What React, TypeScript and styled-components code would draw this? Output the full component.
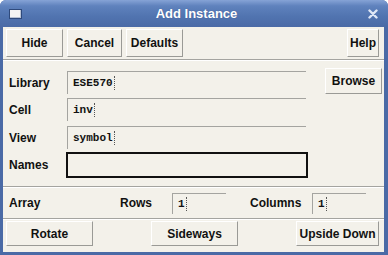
import * as React from "react";
import styled, { createGlobalStyle } from "styled-components";

const GlobalStyle = createGlobalStyle`
  html, body {
    margin: 0;
    padding: 0;
    background: #ffffff;
  }
  * {
    box-sizing: border-box;
  }
`;

const Window = styled.div`
  width: 388px;
  height: 255px;
  display: flex;
  flex-direction: column;
  background: #4a6aa6;
  border-radius: 6px 6px 0 0;
  overflow: hidden;
  font-family: "Liberation Sans", Arial, sans-serif;
`;

const TitleBar = styled.div`
  height: 27px;
  flex: none;
  display: flex;
  align-items: center;
  padding: 0 10px 0 9px;
  background: linear-gradient(#86a3d6 0%, #5f82bd 22%, #5174b0 60%, #4a6aa6 100%);
`;

const WinIcon = styled.div`
  width: 13px;
  height: 10px;
  background: #f4f4f4;
  border: 1px solid #2f4a7c;
  box-shadow: inset -1px -1px 0 #b8c2d4;
`;

const Title = styled.div`
  flex: 1;
  text-align: center;
  color: #ffffff;
  font-weight: bold;
  font-size: 13px;
  padding-left: 3px;
  text-shadow: 0 0 1px #3a5990;
`;

const Body = styled.div`
  flex: 1;
  display: flex;
  flex-direction: column;
  margin: 0 4px 3px 3px;
  background: #f3f1ea;
`;

const Toolbar = styled.div`
  height: 32px;
  display: flex;
  align-items: flex-start;
  gap: 4px;
  padding: 2px 5px 0 3px;
`;

const Button = styled.button<{ $w: number; $h?: number }>`
  width: ${(p) => p.$w}px;
  height: ${(p) => p.$h ?? 28}px;
  margin: 0;
  padding: 0;
  background: #f3f1ea;
  border: 1px solid;
  border-color: #ffffff #9a9a96 #9a9a96 #ffffff;
  font-family: "Liberation Sans", Arial, sans-serif;
  font-weight: bold;
  font-size: 12px;
  color: #111111;
  cursor: pointer;
`;

const Spacer = styled.div<{ $w?: number }>`
  flex: ${(p) => (p.$w ? "none" : 1)};
  width: ${(p) => (p.$w ? `${p.$w}px` : "auto")};
`;

const Separator = styled.div`
  height: 2px;
  border-top: 1px solid #a4a4a0;
  border-bottom: 1px solid #ffffff;
`;

const Form = styled.div`
  height: 125px;
  display: grid;
  grid-template-columns: 58px 239px 1fr;
  grid-template-rows: 27px 28px 26px 26px;
  padding: 10px 2px 0 6px;
`;

const Label = styled.div<{ $h?: number; $w?: number }>`
  width: ${(p) => (p.$w ? `${p.$w}px` : "auto")};
  height: ${(p) => p.$h ?? 23}px;
  display: flex;
  align-items: center;
  font-weight: bold;
  font-size: 12px;
  color: #111111;
`;

const Field = styled.div<{ $w?: number; $h?: number }>`
  width: ${(p) => (p.$w ? `${p.$w}px` : "100%")};
  height: ${(p) => p.$h ?? 23}px;
  display: flex;
  align-items: center;
  padding-left: 5px;
  border-top: 1px solid #a4a4a0;
  border-left: 1px solid #a4a4a0;
  font-family: "Liberation Mono", "Courier New", monospace;
  font-weight: bold;
  font-size: 11px;
  color: #111111;
`;

const NamesField = styled.div`
  width: 242px;
  height: 26px;
  margin-left: -1px;
  border: 2px solid #111111;
  background: #f3f1ea;
`;

const Caret = styled.span`
  display: inline-block;
  width: 1px;
  height: 14px;
  margin-left: 1px;
  border-left: 1px dotted #555555;
`;

const BrowseCell = styled.div`
  display: flex;
  justify-content: flex-end;
  align-items: flex-start;
  margin-top: -3px;
`;

const ArrayRow = styled.div`
  height: 30px;
  display: flex;
  align-items: center;
  padding: 0 0 0 6px;
`;

const BottomRow = styled.div`
  flex: 1;
  display: flex;
  justify-content: space-between;
  align-items: flex-start;
  padding: 1px 5px 0 3px;
`;

const CloseIcon = () => (
  <svg width="10" height="10" viewBox="0 0 10 10">
    <path d="M1.5 1.5 L8.5 8.5 M8.5 1.5 L1.5 8.5" stroke="#dfe7f6" strokeWidth="2.4" strokeLinecap="round" />
  </svg>
);

const TextValue = ({ value }: { value: string }) => (
  <>
    {value}
    <Caret />
  </>
);

export default function App() {
  return (
    <>
      <GlobalStyle />
      <Window>
        <TitleBar>
          <WinIcon />
          <Title>Add Instance</Title>
          <CloseIcon />
        </TitleBar>
        <Body>
          <Toolbar>
            <Button $w={57}>Hide</Button>
            <Button $w={55}>Cancel</Button>
            <Button $w={57}>Defaults</Button>
            <Spacer />
            <Button $w={32}>Help</Button>
          </Toolbar>
          <Separator />
          <Form>
            <Label>Library</Label>
            <Field>
              <TextValue value="ESE570" />
            </Field>
            <BrowseCell>
              <Button $w={57} $h={26}>Browse</Button>
            </BrowseCell>
            <Label>Cell</Label>
            <Field>
              <TextValue value="inv" />
            </Field>
            <div />
            <Label>View</Label>
            <Field>
              <TextValue value="symbol" />
            </Field>
            <div />
            <Label $h={26}>Names</Label>
            <NamesField />
            <div />
          </Form>
          <Separator />
          <ArrayRow>
            <Label $w={111}>Array</Label>
            <Label $w={52}>Rows</Label>
            <Field $w={54} $h={21}>
              <TextValue value="1" />
            </Field>
            <Spacer $w={24} />
            <Label $w={62}>Columns</Label>
            <Field $w={54} $h={21}>
              <TextValue value="1" />
            </Field>
          </ArrayRow>
          <Separator />
          <BottomRow>
            <Button $w={87} $h={25}>Rotate</Button>
            <Button $w={87} $h={25}>Sideways</Button>
            <Button $w={83} $h={25}>Upside Down</Button>
          </BottomRow>
        </Body>
      </Window>
    </>
  );
}
